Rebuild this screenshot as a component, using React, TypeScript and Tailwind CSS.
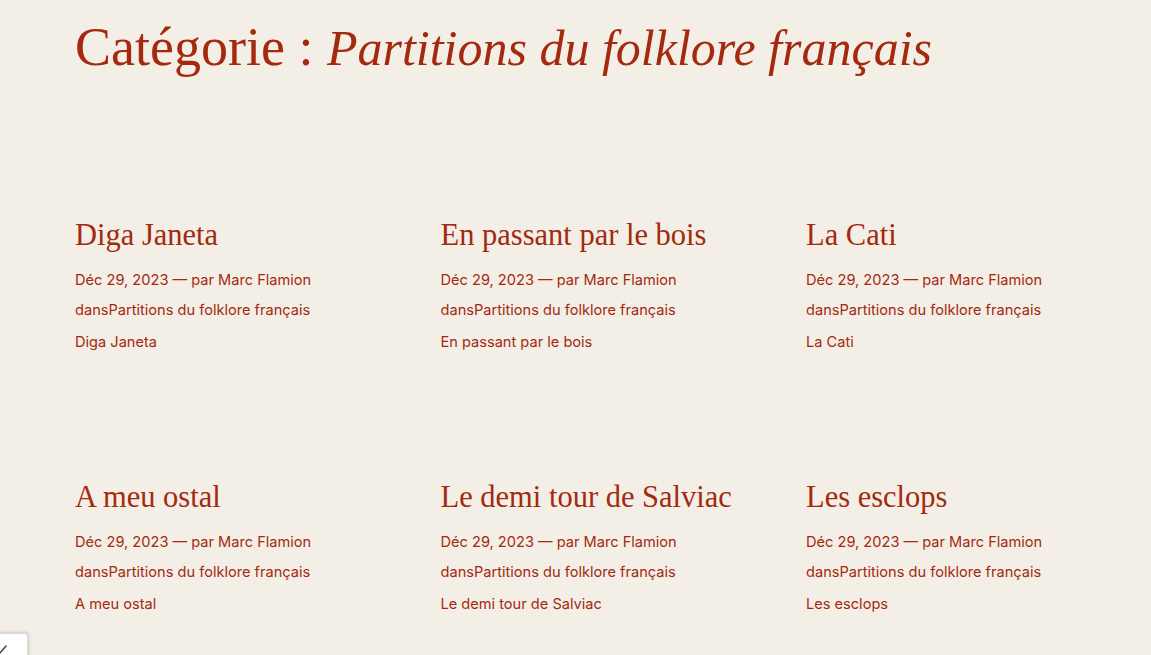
import React from 'react';

const posts = [
  'Diga Janeta',
  'En passant par le bois',
  'La Cati',
  'A meu ostal',
  'Le demi tour de Salviac',
  'Les esclops',
];

const serif = "font-['Liberation_Serif',serif]";
const sans = "font-['Inter',sans-serif]";

const PostCard: React.FC<{ title: string }> = ({ title }) => (
  <article>
    <h2 className={`${serif} text-[30.5px] leading-[36px] text-[#a4290f] whitespace-nowrap`}>{title}</h2>
    <div className={`${sans} mt-[12px] text-[14.6px] text-[#a4290f] whitespace-nowrap`}>
      <p className="leading-[30px]">Déc 29, 2023 — par Marc Flamion</p>
      <p className="leading-[30px]">dansPartitions du folklore français</p>
      <p className="mt-[2px] leading-[30px]">{title}</p>
    </div>
  </article>
);

export default function App() {
  return (
    <div className="min-h-[655px] bg-[#f3efe7] px-[75px] pt-[15px] pb-10">
      <h1 className={`${serif} text-[54px] leading-[65px] text-[#a4290f] whitespace-nowrap`}>
        Catégorie : <em className="text-[50px]">Partitions du folklore français</em>
      </h1>

      <div className="mt-[136px] grid grid-cols-[repeat(3,270px)] gap-x-[95.5px] gap-y-[122px]">
        {posts.map((p) => (
          <PostCard key={p} title={p} />
        ))}
      </div>

      <div className="fixed bottom-[-4px] left-[-6px] w-[34px] h-[26px] bg-white border border-[#dcdcdc] rounded-tr-[4px] shadow-[1px_-1px_3px_rgba(0,0,0,0.15)]">
        <svg className="absolute left-[4px] top-[10px]" width="8" height="10" viewBox="0 0 8 10">
          <path d="M1 9 L7 2" stroke="#444" strokeWidth="1.5" strokeLinecap="round" />
        </svg>
      </div>
    </div>
  );
}
